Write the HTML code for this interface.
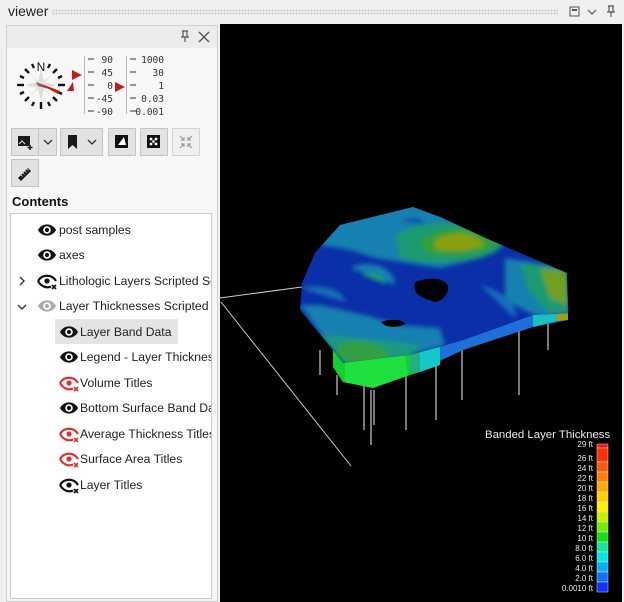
<!DOCTYPE html>
<html><head><meta charset="utf-8"><style>
*{margin:0;padding:0;box-sizing:border-box}
body{width:624px;height:602px;background:#f0f0f0;font-family:"Liberation Sans","DejaVu Sans",sans-serif;position:relative;overflow:hidden}
.abs{position:absolute}
.title{left:8px;top:3px;font-size:14px;color:#222}
.dots{left:52px;top:9px;width:506px;height:6px;background-image:radial-gradient(#c8c8c8 0.8px,transparent 1px);background-size:3px 3px}
.panel{left:6px;top:25px;width:212px;height:577px;border:1px solid #d0d0d0;background:#f7f7f7}
.phead{left:7px;top:26px;width:210px;height:22px;background:#ececec}
.btn{position:absolute;height:28px;border:1px solid #c4c4c4;background:#e2e2e2}
.tree{left:10px;top:213px;width:202px;height:386px;border:1px solid #c8c8c8;background:#fff}
.row{position:absolute;font-size:12.2px;color:#222;font-family:"Liberation Sans",sans-serif;white-space:nowrap;height:20px;line-height:20px}
.num{position:absolute;font-family:"DejaVu Sans Mono","Liberation Mono",monospace;font-size:9.5px;color:#333;text-align:right}
.view{left:220px;top:24px;width:402px;height:578px;background:#000}
</style></head><body>
<div class="abs title">viewer</div>
<div class="abs dots"></div>
<svg class="abs" style="left:566px;top:4px" width="56" height="16">
<rect x="4" y="3" width="9" height="9" fill="none" stroke="#555"/><rect x="6" y="5" width="5" height="2" fill="#555"/>
<path d="M22 6l4 4 4-4" fill="none" stroke="#555" stroke-width="1.2"/>
<path d="M42 2h6M43 2v6h4V2M41 8h8M45 8v5" fill="none" stroke="#555" stroke-width="1.2"/>
</svg>
<div class="abs panel"></div>
<div class="abs phead"></div>
<svg class="abs" style="left:178px;top:29px" width="36" height="16">
<path d="M4 2h6M5 2v6h4V2M3 8h8M7 8v5" fill="none" stroke="#555" stroke-width="1.2"/>
<path d="M21 3l10 10M31 3l-10 10" stroke="#555" stroke-width="1.4"/>
</svg>
<!-- compass -->
<svg class="abs" style="left:14px;top:56px" width="60" height="56">
<g transform="translate(27,29)">
<path d="M0 -16L3 -3 16 0 3 3 0 16 -3 3 -16 0 -3 -3Z" fill="#ddd"/>
<path d="M-11 -11L0 -2 11 -11 2 0 11 11 0 2 -11 11 -2 0Z" fill="#e6e6e6"/>
<g stroke="#111" stroke-width="2.4">
<line x1="0" y1="17" x2="0" y2="24"/><line x1="-17" y1="0" x2="-24" y2="0"/><line x1="17" y1="0" x2="24" y2="0"/>
<line x1="12" y1="-12" x2="16" y2="-16"/><line x1="-12" y1="-12" x2="-16" y2="-16"/><line x1="12" y1="12" x2="16" y2="16"/><line x1="-12" y1="12" x2="-16" y2="16"/>
<line x1="7" y1="-17" x2="9" y2="-21"/><line x1="-7" y1="-17" x2="-9" y2="-21"/><line x1="7" y1="17" x2="9" y2="21"/><line x1="-7" y1="17" x2="-9" y2="21"/>
<line x1="17" y1="-7" x2="21" y2="-9"/><line x1="-17" y1="-7" x2="-21" y2="-9"/><line x1="17" y1="7" x2="21" y2="9"/><line x1="-17" y1="7" x2="-21" y2="9"/>
</g>
<text x="0" y="-14" font-size="12" text-anchor="middle" font-family="Liberation Sans" fill="#111">N</text>
<path d="M-5 -3L19 6 17 9Z" fill="#c41a1a"/>
<path d="M-5 -3L-3 1 8 4Z" fill="#666"/>
<path d="M32 -3l-6 9 7 0Z" fill="#c41a1a"/>
</g>
</svg>
<svg class="abs" style="left:72px;top:68px" width="12" height="14"><path d="M0 2l10 5-10 5z" fill="#c41a1a"/></svg>
<svg class="abs" style="left:115px;top:80px" width="12" height="14"><path d="M0 2l10 5-10 5z" fill="#c41a1a"/></svg>
<div class="abs" style="left:84px;top:56px;width:1px;height:58px;background:#bbb"></div>
<div class="abs" style="left:126px;top:56px;width:1px;height:58px;background:#bbb"></div>
<svg class="abs" style="left:86px;top:55px" width="90" height="62"><g stroke="#333" stroke-width="1">
<line x1="2" y1="4" x2="8" y2="4"/><line x1="2" y1="17" x2="8" y2="17"/><line x1="2" y1="30" x2="8" y2="30"/><line x1="2" y1="43" x2="8" y2="43"/><line x1="2" y1="56" x2="8" y2="56"/>
<line x1="44" y1="4" x2="50" y2="4"/><line x1="44" y1="17" x2="50" y2="17"/><line x1="44" y1="30" x2="50" y2="30"/><line x1="44" y1="43" x2="50" y2="43"/><line x1="44" y1="56" x2="50" y2="56"/></g></svg>
<div class="num" style="left:88px;top:54px;width:25px;line-height:13px">90<br>45<br>0<br>-45<br>-90</div>
<div class="num" style="left:130px;top:54px;width:34px;line-height:13px">1000<br>30<br>1<br>0.03<br>0.001</div>
<!-- buttons -->
<div class="btn" style="left:11px;top:128px;width:46px"></div>
<div class="abs" style="left:38px;top:129px;width:1px;height:26px;background:#c4c4c4"></div>
<svg class="abs" style="left:16px;top:133px" width="40" height="18"><rect x="2" y="3" width="12" height="10" fill="#1a1a1a"/><path d="M3 11l3-3 3 3" stroke="#e2e2e2" fill="none"/><path d="M14 12v5M11.5 14.5h5" stroke="#1a1a1a" stroke-width="1.5"/><path d="M28 7l4 4 4-4" fill="none" stroke="#333" stroke-width="1.3"/></svg>
<div class="btn" style="left:60px;top:128px;width:43px"></div>
<svg class="abs" style="left:64px;top:133px" width="38" height="18"><path d="M4 2h9v14l-4.5-4-4.5 4z" fill="#1a1a1a"/><path d="M24 7l4 4 4-4" fill="none" stroke="#333" stroke-width="1.3"/></svg>
<div class="btn" style="left:108px;top:128px;width:28px"></div>
<svg class="abs" style="left:114px;top:134px" width="16" height="16"><rect x="1" y="1" width="13" height="13" fill="#111"/><path d="M4 11L10 3 12 11z" fill="#fff"/></svg>
<div class="btn" style="left:140px;top:128px;width:28px"></div>
<svg class="abs" style="left:146px;top:134px" width="16" height="16"><rect x="1" y="1" width="13" height="13" fill="#111"/><circle cx="5" cy="5" r="1.4" fill="#fff"/><circle cx="10" cy="5" r="1.4" fill="#fff"/><circle cx="5" cy="10" r="1.4" fill="#fff"/><circle cx="10" cy="10" r="1.4" fill="#fff"/><circle cx="7.5" cy="7.5" r="1.4" fill="#fff"/></svg>
<div class="btn" style="left:172px;top:128px;width:28px;background:#efefef;border-color:#d4d4d4"></div>
<svg class="abs" style="left:178px;top:134px" width="16" height="16" stroke="#999" stroke-width="1.2" fill="none"><path d="M2 2l4 4M6 3v3H3M14 2l-4 4M10 3v3h3M2 14l4-4M6 13v-3H3M14 14l-4-4M10 13v-3h3"/></svg>
<div class="btn" style="left:11px;top:159px;width:28px"></div>
<svg class="abs" style="left:16px;top:165px" width="18" height="18"><path d="M2 13L12 3 15 6 5 16z" fill="#1a1a1a"/><g stroke="#e2e2e2" stroke-width="0.8"><path d="M5 10l1.5 1.5M7 8l1.5 1.5M9 6l1.5 1.5M11 4l1.5 1.5"/></g></svg>
<div class="abs" style="left:12px;top:194px;font-size:13px;font-weight:bold;color:#111">Contents</div>
<div class="abs tree"></div>
<div class="abs" style="left:55px;top:319px;width:123px;height:25px;background:#e4e4e4"></div>
<svg class="abs" style="left:10px;top:214px" width="80" height="290">
<defs>
<g id="eye"><path d="M0 0C4 -7.5 14 -7.5 18 0C14 7.5 4 7.5 0 0Z" fill="#111"/><circle cx="9" cy="0" r="3.8" fill="#fff"/><circle cx="9" cy="0" r="2.1" fill="#111"/></g>
<g id="eyex"><path d="M0 0C4 -7 14 -7 18 0" fill="none" stroke="#111" stroke-width="2.2"/><path d="M0 0C4 7 10 7 13 5.5" fill="none" stroke="#111" stroke-width="2.2"/><circle cx="9" cy="0" r="2.6" fill="#111"/><path d="M14 4l4 4M18 4l-4 4" stroke="#111" stroke-width="1.6"/></g>
<g id="eyer"><path d="M0 0C4 -7 14 -7 18 0" fill="none" stroke="#e03030" stroke-width="2.2"/><path d="M0 0C4 7 10 7 13 5.5" fill="none" stroke="#e03030" stroke-width="2.2"/><circle cx="9" cy="0" r="2.6" fill="#e03030"/><path d="M14 4l4 4M18 4l-4 4" stroke="#e03030" stroke-width="1.6"/></g>
</defs>
<use href="#eye" x="28" y="16"/>
<use href="#eye" x="28" y="41"/>
<use href="#eyex" x="28" y="67"/>
<path d="M10 63l4 4-4 4" fill="none" stroke="#333" stroke-width="1.4"/>
<g opacity="0.35"><use href="#eye" x="28" y="92"/></g>
<path d="M8 91l4 4 4-4" fill="none" stroke="#333" stroke-width="1.4"/>
<use href="#eye" x="50" y="118"/>
<use href="#eye" x="50" y="143"/>
<use href="#eyer" x="50" y="169"/>
<use href="#eye" x="50" y="194"/>
<use href="#eyer" x="50" y="220"/>
<use href="#eyer" x="50" y="245"/>
<use href="#eyex" x="50" y="271"/>
</svg>
<div class="abs" style="left:11px;top:214px;width:200px;height:300px;overflow:hidden">
<div class="row" style="left:48px;top:6px">post samples</div>
<div class="row" style="left:48px;top:31px">axes</div>
<div class="row" style="left:48px;top:57px">Lithologic Layers Scripted Sc</div>
<div class="row" style="left:48px;top:82px">Layer Thicknesses Scripted S</div>
<div class="row" style="left:69px;top:108px">Layer Band Data</div>
<div class="row" style="left:69px;top:133px">Legend - Layer Thickness</div>
<div class="row" style="left:69px;top:159px">Volume Titles</div>
<div class="row" style="left:69px;top:184px">Bottom Surface Band Data</div>
<div class="row" style="left:69px;top:210px">Average Thickness Titles</div>
<div class="row" style="left:69px;top:235px">Surface Area Titles</div>
<div class="row" style="left:69px;top:261px">Layer Titles</div>
</div>
<div class="abs view"></div>
<svg class="abs" style="left:0;top:0" width="624" height="602">
<defs>
<clipPath id="top"><path d="M340 225L413 207 440 217 490 240 567 273 568 313 533 315 463 340 410 355 383 358 343 363 333 350 300 310 302 283 315 253Z"/></clipPath>
<filter id="bl"><feGaussianBlur stdDeviation="2.5"/></filter>
</defs>
<g stroke="#ccc" stroke-width="1"><line x1="220" y1="298" x2="302" y2="287"/><line x1="221" y1="302" x2="351" y2="466"/></g>
<g stroke="#ccc" stroke-width="1.2">
<line x1="320" y1="350" x2="320" y2="375"/><line x1="337" y1="375" x2="337" y2="395"/><line x1="364" y1="380" x2="364" y2="430"/><line x1="371" y1="390" x2="371" y2="445"/><line x1="374" y1="390" x2="374" y2="425"/><line x1="406" y1="360" x2="406" y2="430"/><line x1="436" y1="350" x2="436" y2="420"/><line x1="462" y1="340" x2="462" y2="400"/><line x1="519" y1="330" x2="519" y2="395"/><line x1="548" y1="320" x2="548" y2="350"/><line x1="413" y1="290" x2="413" y2="300"/><line x1="445" y1="283" x2="445" y2="295"/>
</g>
<path d="M333 350L343 363 383 358 410 355 463 340 533 315 568 313 567 273 568 320 533 327 463 350 410 375 373 388 343 382 333 367Z" fill="#1e6fd8"/>
<path d="M333 350L343 363 383 358 410 355 410 375 373 388 343 382 333 367Z" fill="#10d030"/>
<path d="M345 362L383 358 405 355 408 375 373 388 345 382Z" fill="#20e040"/>
<path d="M410 355L420 352 420 372 410 375Z" fill="#22b080"/>
<path d="M420 352L440 347 440 365 420 372Z" fill="#12c8c8"/>
<path d="M533 315L555 314 557 321 533 327Z" fill="#18c0c0"/>
<path d="M555 314L568 313 567 273 568 320 557 321Z" fill="#a0a010"/>
<g clip-path="url(#top)">
<rect x="290" y="200" width="290" height="170" fill="#0a2fa8"/>
<g filter="url(#bl)">
<path d="M330 215L413 200 445 212 495 238 480 258 440 268 400 262 375 258 350 250 320 245Z" fill="#1580b0"/>
<path d="M395 235C430 215 480 222 505 242 495 262 440 268 400 258Z" fill="#1a9a70"/>
<path d="M420 240C450 222 480 228 495 244 480 256 445 258 425 252Z" fill="#30a030"/>
<path d="M435 240C455 230 472 232 485 244 472 252 450 252 435 249Z" fill="#8aa010"/>
<path d="M400 222C410 215 425 218 425 224 415 229 402 228Z" fill="#0a50b0"/>
<path d="M505 258L567 268 570 315 540 318 505 300Z" fill="#1580b0"/>
<path d="M520 262L567 270 570 312 548 312 528 290Z" fill="#1a9a70"/>
<path d="M540 268L567 272 568 305 550 298Z" fill="#70a020"/>
<path d="M300 305L333 350 343 363 383 358 410 355 445 345 440 328 400 325 365 315 320 305Z" fill="#1580b0"/>
<path d="M320 335L383 340 420 345 410 358 345 365Z" fill="#1a9a80"/>
<path d="M340 345C360 337 380 343 392 358 370 368 345 365 335 355Z" fill="#30a040"/>
<path d="M350 268C372 258 395 268 395 285 372 293 345 285Z" fill="#1580b0"/>
<path d="M362 275C375 270 388 276 385 284 372 287 362 283Z" fill="#1a9a80"/>
<path d="M300 288C320 283 345 290 345 302 320 308 303 304Z" fill="#1570b8"/>
<path d="M480 285C500 290 520 305 515 318 495 308Z" fill="#1570b8"/>
<path d="M440 300C470 305 500 315 520 318 470 330 445 325Z" fill="#0e3fbb"/>
</g>
</g>
<path d="M415 282C430 276 450 278 448 290 445 300 435 305 430 300 420 298 412 292 415 282Z" fill="#000"/>
<path d="M381 322C390 318 405 320 405 324 398 328 385 328 381 322Z" fill="#000"/>
<text x="485" y="438" font-size="11.4" fill="#e8e8e8" font-family="Liberation Sans">Banded Layer Thickness</text>
<g font-family="Liberation Sans" font-size="8" fill="#e8e8e8" text-anchor="end">
<text x="593" y="447">29 ft</text><text x="593" y="461">26 ft</text><text x="593" y="471">24 ft</text><text x="593" y="481">22 ft</text><text x="593" y="491">20 ft</text><text x="593" y="501">18 ft</text><text x="593" y="511">16 ft</text><text x="593" y="521">14 ft</text><text x="593" y="531">12 ft</text><text x="593" y="541">10 ft</text><text x="593" y="551">8.0 ft</text><text x="593" y="561">6.0 ft</text><text x="593" y="571">4.0 ft</text><text x="593" y="581">2.0 ft</text><text x="593" y="591">0.0010 ft</text>
</g>
<g stroke="#ddd" stroke-width="0.5">
<rect x="597" y="444" width="11" height="4" fill="#ff1010"/>
<rect x="597" y="448" width="11" height="14" fill="#ff3000"/>
<rect x="597" y="462" width="11" height="10" fill="#ff5a00"/>
<rect x="597" y="472" width="11" height="10" fill="#ff8000"/>
<rect x="597" y="482" width="11" height="10" fill="#ffa800"/>
<rect x="597" y="492" width="11" height="10" fill="#ffd000"/>
<rect x="597" y="502" width="11" height="10" fill="#fff000"/>
<rect x="597" y="512" width="11" height="10" fill="#c8f000"/>
<rect x="597" y="522" width="11" height="10" fill="#70f000"/>
<rect x="597" y="532" width="11" height="10" fill="#10e010"/>
<rect x="597" y="542" width="11" height="10" fill="#10e8a0"/>
<rect x="597" y="552" width="11" height="10" fill="#00e8e8"/>
<rect x="597" y="562" width="11" height="10" fill="#00b0ff"/>
<rect x="597" y="572" width="11" height="10" fill="#1070ff"/>
<rect x="597" y="582" width="11" height="10" fill="#1030ff"/>
</g>
</svg>
</body></html>
